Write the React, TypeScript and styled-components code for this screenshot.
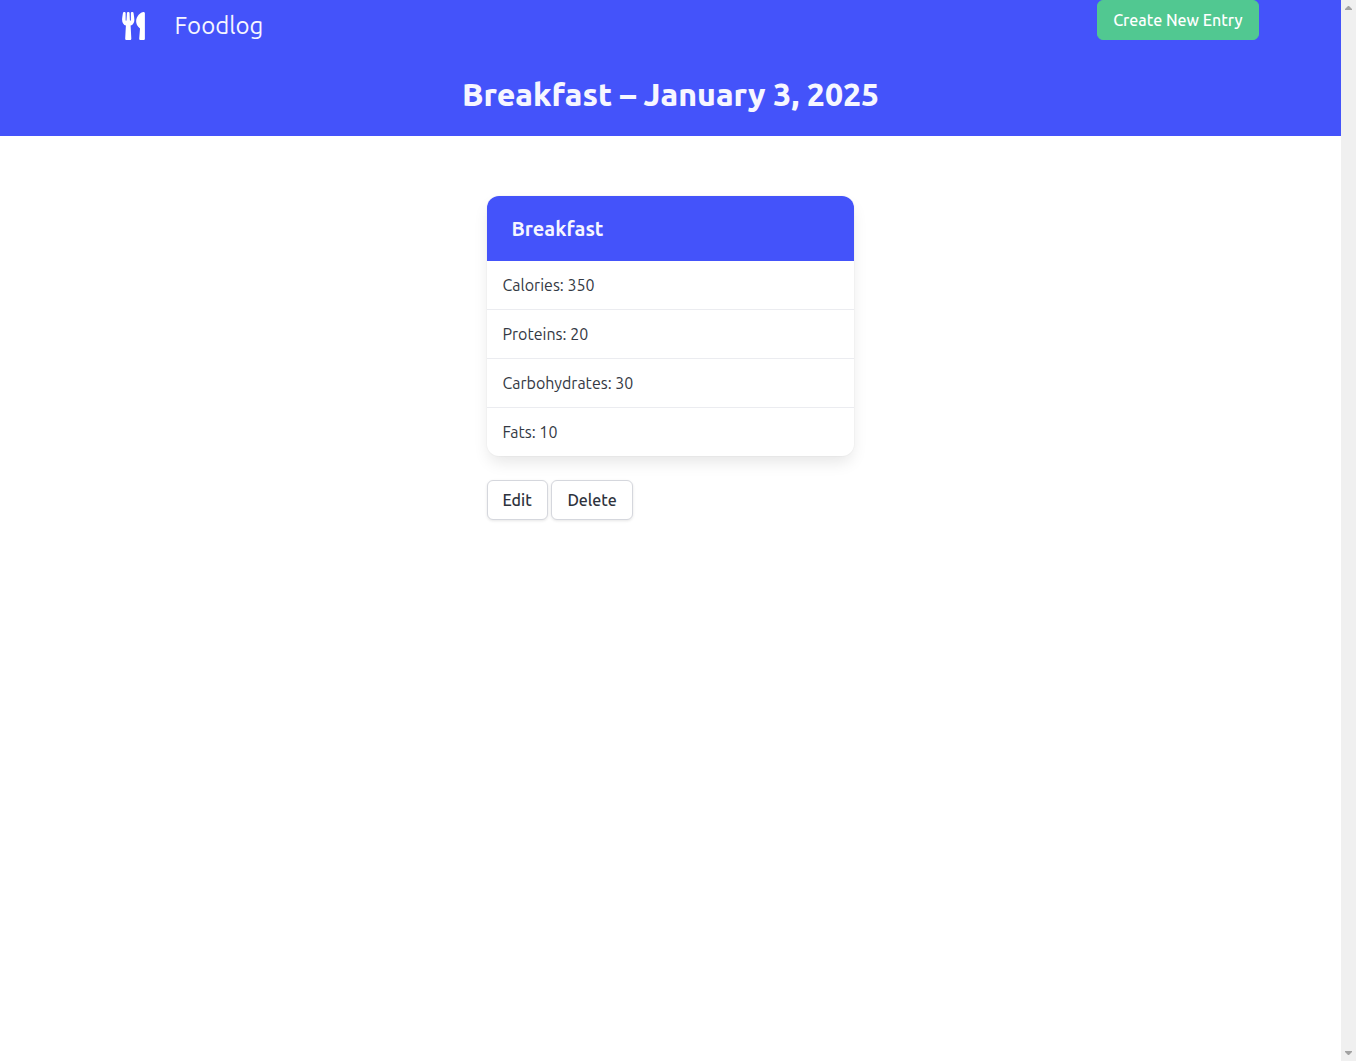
import React from "react";
import styled, { createGlobalStyle } from "styled-components";
import { FaUtensils } from "react-icons/fa";

const GlobalStyle = createGlobalStyle`
  *, *::before, *::after {
    box-sizing: border-box;
  }
  body {
    margin: 0;
    background: #ffffff;
    color: #343944;
    font-family: Ubuntu, "Open Sans", "Noto Sans", sans-serif;
    font-size: 16px;
    line-height: 24px;
  }
  h1, h2, ul {
    margin: 0;
    padding: 0;
  }
`;

const Window = styled.div`
  display: grid;
  grid-template-columns: minmax(0, 1fr) 15px;
  min-height: 100vh;
`;

const ScrollRail = styled.div`
  display: flex;
  flex-direction: column;
  justify-content: space-between;
  align-items: center;
  padding: 5px 0;
  background: #f0f0f0;
`;

const Arrow = styled.svg`
  display: block;
  width: 7px;
  height: 5px;
  fill: #a3a3a3;
`;

const Hero = styled.header`
  height: 136px;
  background: #4453fa;
  color: #f6f6ff;
`;

const Container = styled.div`
  max-width: 1176px;
  margin: 0 auto;
`;

const TopBar = styled.nav`
  display: flex;
  justify-content: space-between;
  align-items: flex-start;
  height: 76px;
`;

const Brand = styled.a`
  display: flex;
  align-items: center;
  gap: 29px;
  height: 52px;
  padding-left: 38px;
  color: inherit;
  font-size: 24px;
  font-weight: 400;
  line-height: 36px;
  text-decoration: none;

  svg {
    width: 25px;
    height: 28px;
    color: #ffffff;
  }
`;

const Button = styled.button<{ $primary?: boolean }>`
  height: 40px;
  padding: 0 15px;
  border: 1px solid ${(p) => (p.$primary ? "#51c891" : "#d5d7dd")};
  border-radius: 6px;
  background: ${(p) => (p.$primary ? "#51c891" : "#ffffff")};
  color: ${(p) => (p.$primary ? "#ffffff" : "#2e333d")};
  box-shadow: ${(p) => (p.$primary ? "none" : "0 1px 3px rgba(10, 10, 10, 0.1)")};
  font: inherit;
  font-weight: 500;
  cursor: pointer;
`;

const PageTitle = styled.h1`
  font-size: 32px;
  font-weight: 800;
  line-height: 36px;
  text-align: center;
`;

const Entry = styled.main`
  width: calc(100% / 3 - 24px);
  min-width: 300px;
  margin: 0 auto;
  padding-top: 60px;
`;

const Card = styled.section`
  overflow: hidden;
  border-radius: 12px;
  background: #ffffff;
  box-shadow: 0 8px 16px -2px rgba(10, 10, 10, 0.1), 0 0 0 1px rgba(10, 10, 10, 0.02);
`;

const CardTitle = styled.h2`
  padding: 19px 25px 18px;
  background: #4453fa;
  color: #f6f6ff;
  font-size: 20px;
  font-weight: 600;
  line-height: 28px;
`;

const Facts = styled.ul`
  list-style: none;
`;

const Fact = styled.li`
  padding: 12px 16px;

  & + & {
    border-top: 1px solid #ebecf0;
  }
`;

const Actions = styled.div`
  padding-top: 24px;
`;

const facts = [
  { name: "Calories", amount: 350 },
  { name: "Proteins", amount: 20 },
  { name: "Carbohydrates", amount: 30 },
  { name: "Fats", amount: 10 },
];

export default function App() {
  return (
    <>
      <GlobalStyle />
      <Window>
        <div>
          <Hero>
            <Container>
              <TopBar>
                <Brand href="#">
                  <FaUtensils aria-hidden="true" />
                  Foodlog
                </Brand>
                <Button type="button" $primary>
                  Create New Entry
                </Button>
              </TopBar>
              <PageTitle>Breakfast – January 3, 2025</PageTitle>
            </Container>
          </Hero>
          <Container>
            <Entry>
              <Card>
                <CardTitle>Breakfast</CardTitle>
                <Facts>
                  {facts.map((fact) => (
                    <Fact key={fact.name}>{`${fact.name}: ${fact.amount}`}</Fact>
                  ))}
                </Facts>
              </Card>
              <Actions>
                <Button type="button">Edit</Button> <Button type="button">Delete</Button>
              </Actions>
            </Entry>
          </Container>
        </div>
        <ScrollRail aria-hidden="true">
          <Arrow viewBox="0 0 7 5">
            <path d="M0 5V4L3 1H4L7 4V5Z" />
          </Arrow>
          <Arrow viewBox="0 0 7 5">
            <path d="M0 0V1L3 4H4L7 1V0Z" />
          </Arrow>
        </ScrollRail>
      </Window>
    </>
  );
}
